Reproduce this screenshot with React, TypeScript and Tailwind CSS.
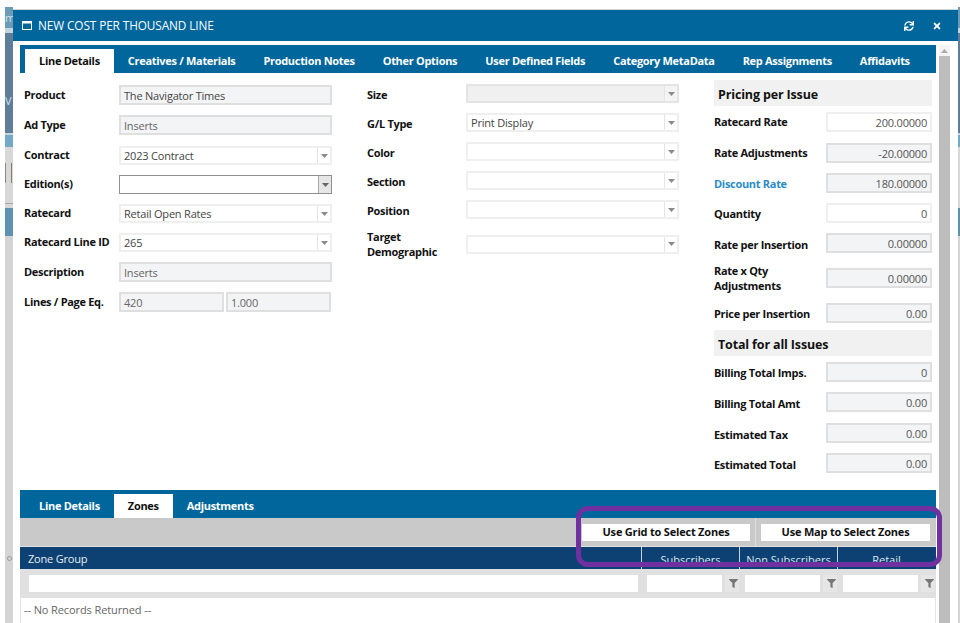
import React from "react";
import { FaSync, FaTimes, FaFilter } from "react-icons/fa";

const Caret = ({ dark }: { dark?: boolean }) => (
  <svg width="7" height="4" viewBox="0 0 7 4" className="block">
    <path d="M0 0h7L3.500 4z" fill={dark ? "#666" : "#8a8a8a"} />
  </svg>
);

const Label = ({ children, className = "" }: { children: React.ReactNode; className?: string }) => (
  <div className={`font-bold text-[#111] leading-[15px] tracking-[-0.3px] ${className}`}>{children}</div>
);

const ReadOnly = ({ value, w, dark }: { value: string; w: string; dark?: boolean }) => (
  <div className={`${w} h-[20px] shrink-0 border-2 border-[#dfdfdf] bg-[#f3f4f5] px-[3px] pt-[2px] flex items-center ${dark ? "text-[#444]" : "text-[#666]"}`}>
    {value}
  </div>
);

const Select = ({
  value = "",
  w,
  disabled,
  focus,
}: {
  value?: string;
  w: string;
  disabled?: boolean;
  focus?: boolean;
}) => (
  <div
    className={`${w} h-[19px] shrink-0 flex ${focus ? "border border-[#8f8f8f]" : disabled ? "border-2 border-[#e4e4e4] bg-[#f0f0f0]" : "border-2 border-[#efefef]"} ${disabled ? "" : "bg-white"}`}
  >
    <div className="flex-1 px-[3px] pt-[2px] flex items-center text-[#444]">{value}</div>
    <div className={`w-[13px] flex items-center justify-center border-l ${focus ? "border-[#aaa] bg-[#e6e6e6]" : "border-[#e4e4e4]"} ${disabled ? "bg-[#f4f4f4]" : ""}`}>
      <Caret dark={focus} />
    </div>
  </div>
);

const Money = ({ value, ro = true }: { value: string; ro?: boolean }) => (
  <div
    className={`w-[106px] h-[20px] shrink-0 border-2 flex items-center justify-end pr-[3px] pt-[3px] text-[#555] ${ro ? "border-[#dfdfdf] bg-[#f3f4f5]" : "border-[#efefef] bg-white"}`}
  >
    {value}
  </div>
);

const LeftRow = ({ label, top, children }: { label: string; top: string; children: React.ReactNode }) => (
  <div className={`flex items-center ${top}`}>
    <Label className="w-[95px] shrink-0 pb-[2px]">{label}</Label>
    {children}
  </div>
);

const MidRow = ({
  label,
  top,
  value,
  disabled,
  lift = "pt-[2px]",
}: {
  label: React.ReactNode;
  top: string;
  value?: string;
  disabled?: boolean;
  lift?: string;
}) => (
  <div className={`flex items-center ${top}`}>
    <Label className={`w-[99px] shrink-0 ${lift}`}>{label}</Label>
    <Select w="w-[213px]" value={value} disabled={disabled} />
  </div>
);

const RightRow = ({
  label,
  top,
  value,
  ro = true,
  blue,
  lift = "",
}: {
  label: React.ReactNode;
  top: string;
  value: string;
  ro?: boolean;
  blue?: boolean;
  lift?: string;
}) => (
  <div className={`flex items-center ${top}`}>
    <div className={`w-[112px] shrink-0 font-bold leading-[15px] tracking-[-0.3px] ${lift} ${blue ? "text-[#2b8cc4]" : "text-[#111]"}`}>{label}</div>
    <Money value={value} ro={ro} />
  </div>
);

const SectionHead = ({ children, top }: { children: React.ReactNode; top: string }) => (
  <div className={`h-[26px] bg-[#f1f1f1] pl-[4px] pt-[5px] flex items-center text-[12.500px] font-bold tracking-[-0.15px] text-[#111] ${top}`}>{children}</div>
);

const Tab = ({ children, active }: { children: React.ReactNode; active?: boolean }) => (
  <div
    className={`px-[14px] h-full flex items-center font-bold whitespace-nowrap ${active ? "bg-white text-[#111]" : "text-white"}`}
  >
    {children}
  </div>
);

const FilterCell = () => (
  <div className="w-[98px] shrink-0 flex items-center pl-[6px] gap-[3px]">
    <div className="w-[75px] h-[17px] bg-white" />
    <div className="w-[14px] h-[17px] pl-[2px] flex items-center justify-center bg-[#e6e6e6]">
      <FaFilter className="text-[#777] text-[9px]" />
    </div>
  </div>
);

const HeadCell = ({ children }: { children: string }) => (
  <div className="w-[98px] shrink-0 border-l border-[#c5d3e0] text-center text-[#dbe6f0] pt-[5px] leading-[15px]">{children}</div>
);

const Strip = () => (
  <div className="w-[8px] shrink-0 flex flex-col text-[11px] leading-none text-[#cfe0ea] overflow-hidden bg-[#d4d4d4]">
    <div className="h-[21px] shrink-0 bg-[#6b9bb5] flex items-center">m</div>
    <div className="h-[5px] shrink-0 bg-[#c6d4dd]" />
    <div className="h-[100px] shrink-0 bg-[#5f7d99] flex items-center pt-[35px]">V</div>
    <div className="h-[2px] shrink-0 bg-[#c6d4dd]" />
    <div className="h-[12px] shrink-0 bg-[#72a9c9]" />
    <div className="h-[56px] shrink-0 bg-[#d8d8d8] flex justify-between pt-[16px] pr-[1px]">
      <div className="w-[1px] h-[20px] bg-[#8a8a8a]" />
      <div className="w-[1px] h-[20px] bg-[#8a7a6a]" />
    </div>
    <div className="h-[1px] shrink-0 bg-[#a8a8a8]" />
    <div className="h-[4px] shrink-0 bg-[#d8d8d8]" />
    <div className="h-[28px] shrink-0 bg-[#5d93b1]" />
    <div className="flex-1 flex items-end justify-center pb-[62px]">
      <div className="w-[5px] h-[5px] rounded-full border border-[#999]" />
    </div>
  </div>
);

const RightStrip = () => (
  <div className="w-[2px] shrink-0 flex flex-col overflow-hidden bg-[#d4d4d4]">
    <div className="h-[21px] shrink-0 bg-[#6b9bb5]" />
    <div className="h-[5px] shrink-0 bg-[#c6d4dd]" />
    <div className="h-[100px] shrink-0 bg-[#5f7d99]" />
    <div className="h-[2px] shrink-0 bg-[#c6d4dd]" />
    <div className="h-[12px] shrink-0 bg-[#72a9c9]" />
    <div className="h-[61px] shrink-0 bg-[#d8d8d8]" />
    <div className="h-[28px] shrink-0 bg-[#5d93b1]" />
  </div>
);

export default function App() {
  return (
    <div
      className="relative w-[960px] h-[623px] overflow-hidden bg-white flex pt-[7px] pl-[5px] text-[11px] text-[#444]"
      style={{ fontFamily: '"Open Sans", "Noto Sans", sans-serif' }}
    >
      <Strip />
      <div className="w-[945px] shrink-0 flex flex-col mt-[2px] border-t border-[#cdd7de]">
        {/* title bar */}
        <div className="h-[31px] shrink-0 bg-[#00669c] flex items-center pl-[9px] pr-[16px] text-white">
          <svg width="10" height="9" viewBox="0 0 10 9" className="mr-[6px]">
            <rect x="0.500" y="0.500" width="9" height="8" fill="none" stroke="#fff" />
            <rect x="0" y="0" width="10" height="2.500" fill="#fff" />
          </svg>
          <span className="text-[11.800px] tracking-[-0.1px]">NEW COST PER THOUSAND LINE</span>
          <div className="ml-auto flex items-center gap-[18px]">
            <FaSync className="text-[10px]" />
            <FaTimes className="text-[10px]" />
          </div>
        </div>

        <div className="flex-1 flex min-h-0 bg-white pt-[4px]">
          {/* content */}
          <div className="w-[916px] shrink-0 ml-[7px] flex flex-col min-h-0">
            <div className="h-[28px] shrink-0 bg-[#00669c] flex pl-[5px] pt-[4px] tracking-[-0.3px]">
              <Tab active>Line Details</Tab>
              <Tab>Creatives / Materials</Tab>
              <Tab>Production Notes</Tab>
              <Tab>Other Options</Tab>
              <Tab>User Defined Fields</Tab>
              <Tab>Category MetaData</Tab>
              <Tab>Rep Assignments</Tab>
              <Tab>Affidavits</Tab>
            </div>

            {/* form */}
            <div className="h-[417px] shrink-0 flex tracking-[-0.2px]">
              <div className="w-[312px] ml-[4px] shrink-0 flex flex-col">
                <LeftRow label="Product" top="mt-[12px]"><ReadOnly w="w-[213px]" value="The Navigator Times" dark /></LeftRow>
                <LeftRow label="Ad Type" top="mt-[10px]"><ReadOnly w="w-[213px]" value="Inserts" /></LeftRow>
                <LeftRow label="Contract" top="mt-[11px]"><Select w="w-[213px]" value="2023 Contract" /></LeftRow>
                <LeftRow label="Edition(s)" top="mt-[10px]"><Select w="w-[213px]" focus /></LeftRow>
                <LeftRow label="Ratecard" top="mt-[10px]"><Select w="w-[213px]" value="Retail Open Rates" /></LeftRow>
                <LeftRow label="Ratecard Line ID" top="mt-[10px]"><Select w="w-[213px]" value="265" /></LeftRow>
                <LeftRow label="Description" top="mt-[10px]"><ReadOnly w="w-[213px]" value="Inserts" /></LeftRow>
                <LeftRow label="Lines / Page Eq." top="mt-[10px]">
                  <ReadOnly w="w-[105px]" value="420" />
                  <ReadOnly w="w-[105px] ml-[2px]" value="1.000" />
                </LeftRow>
              </div>

              <div className="w-[311px] ml-[31px] shrink-0 flex flex-col">
                <MidRow label="Size" top="mt-[11px]" disabled />
                <MidRow label="G/L Type" top="mt-[10px]" value="Print Display" />
                <MidRow label="Color" top="mt-[10px]" />
                <MidRow label="Section" top="mt-[10px]" />
                <MidRow label="Position" top="mt-[10px]" />
                <MidRow label={<>Target<br />Demographic</>} top="mt-[10px]" lift="" />
              </div>

              <div className="w-[218px] ml-[36px] shrink-0 flex flex-col">
                <SectionHead top="mt-[7px]">Pricing per Issue</SectionHead>
                <RightRow label="Ratecard Rate" top="mt-[6px]" value="200.00000" ro={false} lift="pb-[2px]" />
                <RightRow label="Rate Adjustments" top="mt-[11px]" value="-20.00000" lift="pb-[2px]" />
                <RightRow label="Discount Rate" top="mt-[10px]" value="180.00000" blue />
                <RightRow label="Quantity" top="mt-[10px]" value="0" ro={false} />
                <RightRow label="Rate per Insertion" top="mt-[10px]" value="0.00000" lift="pt-[2px]" />
                <RightRow label={<>Rate x Qty<br />Adjustments</>} top="mt-[10px]" value="0.00000" />
                <RightRow label="Price per Insertion" top="mt-[10px]" value="0.00" />
                <SectionHead top="mt-[7px]">Total for all Issues</SectionHead>
                <RightRow label="Billing Total Imps." top="mt-[6px]" value="0" />
                <RightRow label="Billing Total Amt" top="mt-[10px]" value="0.00" lift="pt-[2px]" />
                <RightRow label="Estimated Tax" top="mt-[11px]" value="0.00" lift="pt-[2px]" />
                <RightRow label="Estimated Total" top="mt-[10px]" value="0.00" lift="pt-[2px]" />
              </div>
            </div>

            {/* lower tabs */}
            <div className="h-[28px] shrink-0 bg-[#00669c] flex pl-[5px] pt-[4px] tracking-[-0.3px]">
              <Tab>Line Details</Tab>
              <Tab active>Zones</Tab>
              <Tab>Adjustments</Tab>
            </div>
            <div className="h-[29px] shrink-0 bg-[#c9c9c9] border-b border-[#e2e2e2] flex items-center justify-end pr-[6px] font-bold text-[#111] tracking-[-0.2px]">
              <div className="w-[168px] h-[17px] bg-white flex items-center justify-center">Use Grid to Select Zones</div>
              <div className="w-[1px] h-full bg-[#dcdcdc] mx-[5px]" />
              <div className="w-[169px] h-[17px] bg-white flex items-center justify-center">Use Map to Select Zones</div>
            </div>
            <div className="h-[22px] shrink-0 bg-[#0d4073] flex overflow-hidden">
              <div className="w-[621px] shrink-0 pl-[8px] pt-[2px] flex items-center text-[#e8eef4] tracking-[-0.2px]">Zone Group</div>
              <HeadCell>Subscribers</HeadCell>
              <HeadCell>Non Subscribers</HeadCell>
              <HeadCell>Retail</HeadCell>
            </div>
            <div className="h-[29px] shrink-0 bg-[#e0e0e0] flex">
              <div className="w-[621px] shrink-0 flex items-center pl-[9px]">
                <div className="w-[609px] h-[17px] bg-white" />
              </div>
              <FilterCell />
              <FilterCell />
              <FilterCell />
            </div>
            <div className="flex-1 min-h-0 border-l border-r border-[#e4e4e4] pl-[3px] pt-[4px] text-[#666] tracking-[-0.1px]">-- No Records Returned --</div>
          </div>

          {/* scrollbar */}
          <div className="w-[11px] ml-[3px] shrink-0 flex flex-col bg-[#f4f4f4]">
            <div className="h-[11px] shrink-0 flex items-center justify-center">
              <svg width="7" height="4" viewBox="0 0 7 4"><path d="M3.500 0L7 4H0z" fill="#aaa" /></svg>
            </div>
            <div className="flex-1 bg-[#bdbdbd]" />
          </div>
        </div>
      </div>
      <RightStrip />

      {/* annotation */}
      <div className="absolute left-[576px] top-[506px] w-[366px] h-[61px] border-[5px] border-[#7030a0] rounded-[12px]" />
    </div>
  );
}
